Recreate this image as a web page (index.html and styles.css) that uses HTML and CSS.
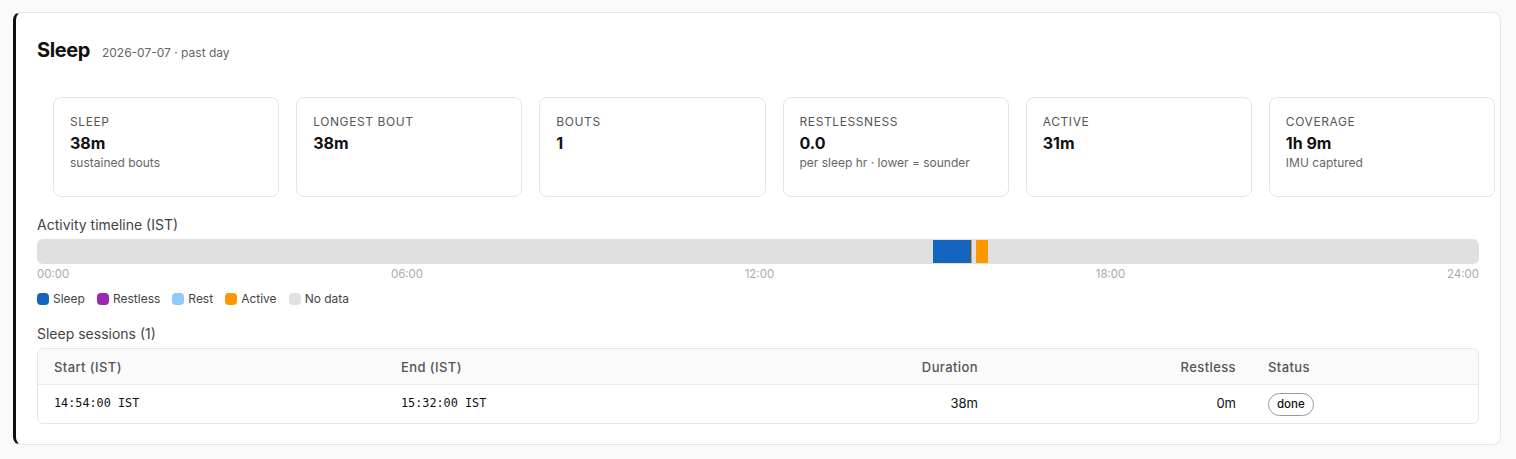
FILE: index.html
```html
<!DOCTYPE html>
<html>
<head>
<meta charset="utf-8">
<link rel="stylesheet" href="styles.css">
</head>
<body>
<section class="card">
  <header class="head">
    <h1 class="title">Sleep</h1>
    <span class="sub">2026-07-07 · past day</span>
  </header>

  <div class="stats">
    <div class="stat"><div class="label">Sleep</div><div class="value">38m</div><div class="hint">sustained bouts</div></div>
    <div class="stat"><div class="label">Longest bout</div><div class="value">38m</div></div>
    <div class="stat"><div class="label">Bouts</div><div class="value">1</div></div>
    <div class="stat"><div class="label">Restlessness</div><div class="value">0.0</div><div class="hint">per sleep hr · lower = sounder</div></div>
    <div class="stat"><div class="label">Active</div><div class="value">31m</div></div>
    <div class="stat"><div class="label">Coverage</div><div class="value">1h 9m</div><div class="hint">IMU captured</div></div>
  </div>

  <div class="section-title">Activity timeline (IST)</div>
  <div class="timeline">
    <div class="seg sleep" style="left:62.136%;width:2.635%"></div>
    <div class="seg active" style="left:64.771%;width:0.08%"></div>
    <div class="seg active" style="left:65.118%;width:0.832%"></div>
  </div>
  <div class="axis">
    <span>00:00</span><span>06:00</span><span>12:00</span><span>18:00</span><span>24:00</span>
  </div>
  <div class="legend">
    <span class="item"><i class="dot sleep"></i>Sleep</span>
    <span class="item"><i class="dot restless"></i>Restless</span>
    <span class="item"><i class="dot rest"></i>Rest</span>
    <span class="item"><i class="dot active"></i>Active</span>
    <span class="item"><i class="dot nodata"></i>No data</span>
  </div>

  <div class="section-title sessions-title">Sleep sessions (1)</div>
  <div class="table-wrap">
    <table class="table">
      <colgroup>
        <col class="c1"><col class="c2"><col class="c3"><col class="c4"><col class="c5">
      </colgroup>
      <thead>
        <tr><th>Start (IST)</th><th>End (IST)</th><th class="num">Duration</th><th class="num">Restless</th><th>Status</th></tr>
      </thead>
      <tbody>
        <tr><td class="mono">14:54:00 IST</td><td class="mono">15:32:00 IST</td><td class="num">38m</td><td class="num">0m</td><td><span class="badge">done</span></td></tr>
      </tbody>
    </table>
  </div>
</section>
</body>
</html>
```
FILE: styles.css
```css
* { box-sizing: border-box; }
html, body { margin: 0; padding: 0; }
body {
  background: #fafafa;
  font-family: Inter, "Noto Sans", "Liberation Sans", sans-serif;
  color: #111;
  padding: 12px 15px 15px 13px;
}
.card {
  background: #fff;
  border: 1px solid #e6e6e6;
  border-left: 3px solid #111;
  border-radius: 8px;
  padding: 23px 21px 20px 21px;
}
.head {
  display: flex;
  align-items: baseline;
  gap: 12px;
}
.title {
  margin: 0;
  font-size: 20px;
  font-weight: 700;
  line-height: 28px;
  letter-spacing: -0.4px;
}
.sub {
  font-size: 12px;
  color: #666;
}
.stats {
  display: grid;
  grid-template-columns: repeat(6, 1fr);
  gap: 17px;
  margin: 33px -16px 0 16px;
}
.stat {
  height: 100px;
  border: 1px solid #e6e6e6;
  border-radius: 8px;
  padding: 16px 16px;
}
.label {
  font-size: 12px;
  text-transform: uppercase;
  letter-spacing: 0.6px;
  color: #555;
  line-height: 16px;
}
.value {
  font-size: 16px;
  font-weight: 700;
  line-height: 22px;
  margin-top: 2px;
}
.hint {
  font-size: 12px;
  color: #666;
  line-height: 16px;
  margin-top: 1px;
}
.section-title {
  font-size: 14px;
  color: #444;
  line-height: 18px;
  margin-top: 19px;
}
.timeline {
  position: relative;
  height: 25px;
  background: #e0e0e0;
  border-radius: 6px;
  margin-top: 5px;
  overflow: hidden;
}
.seg {
  position: absolute;
  top: 1px;
  bottom: 1px;
}
.seg.sleep, .dot.sleep { background: #1565c0; }
.seg.active, .dot.active { background: #ff9800; }
.dot.restless { background: #9c27b0; }
.dot.rest { background: #90caf9; }
.dot.nodata { background: #e0e0e0; }
.axis {
  display: flex;
  justify-content: space-between;
  font-size: 11.5px;
  color: #aaa;
  line-height: 16px;
  margin-top: 2px;
}
.legend {
  display: flex;
  gap: 12px;
  font-size: 12px;
  color: #444;
  line-height: 16px;
  margin-top: 9px;
}
.item {
  display: inline-flex;
  align-items: center;
  gap: 4px;
}
.dot {
  display: inline-block;
  width: 12px;
  height: 12px;
  border-radius: 4px;
}
.sessions-title { margin-top: 18px; }
.table-wrap {
  margin-top: 5px;
  border: 1px solid #e6e6e6;
  border-radius: 6px;
  overflow: hidden;
}
.table {
  width: 100%;
  border-collapse: collapse;
  table-layout: fixed;
  font-size: 13px;
}
.c1 { width: 347px; }
.c2 { width: 348px; }
.c4 { width: 258px; }
.c5 { width: 226px; }
th {
  background: #fafafa;
  font-weight: 500;
  color: #555;
  letter-spacing: 0.4px;
  text-align: left;
  padding: 10px 16px 9px;
  line-height: 16px;
  border-bottom: 1px solid #ececec;
}
td {
  padding: 7px 16px;
  line-height: 23px;
  color: #111;
}
.num { text-align: right; }
.mono {
  font-family: "DejaVu Sans Mono", "Liberation Mono", monospace;
  font-size: 11.8px;
}
.badge {
  display: inline-block;
  vertical-align: middle;
  border: 1px solid #999;
  border-radius: 12px;
  padding: 2px 8px;
  font-size: 11.5px;
  line-height: 17px;
  font-weight: 500;
}
```
